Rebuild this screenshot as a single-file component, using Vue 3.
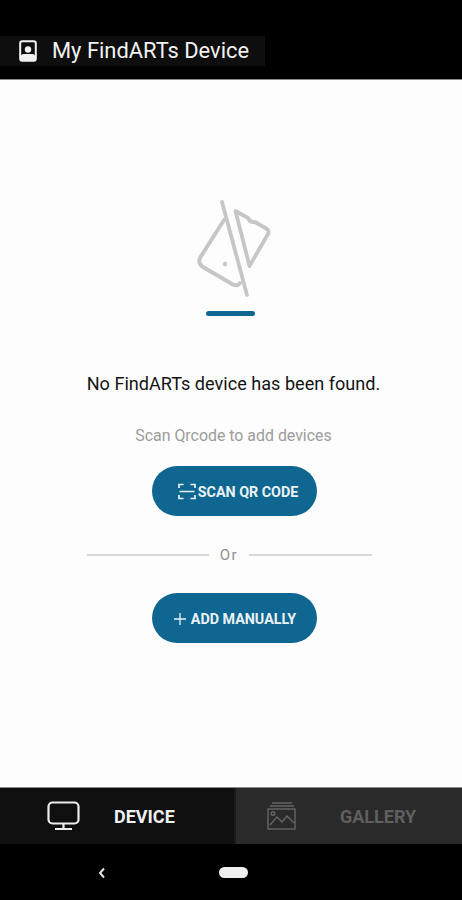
<template>
  <div class="screen">
    <header class="top">
      <div class="title-chip">
        <svg class="title-icon" width="18" height="22" viewBox="0 0 18 22">
          <rect x="1.2" y="1.2" width="15.6" height="19.6" rx="2" fill="none" stroke="#f2f2f2" stroke-width="2" />
          <circle cx="9" cy="9.5" r="3.2" fill="#f2f2f2" />
          <path d="M2 21v-5q0-2 3-2h8q3 0 3 2v5z" fill="#f2f2f2" />
        </svg>
        <span>My FindARTs Device</span>
      </div>
    </header>

    <main class="content">
      <svg class="empty-icon" width="90" height="110" viewBox="190 195 90 110">
        <g fill="none" stroke="#c6c6c6" stroke-width="3.8" stroke-linejoin="round" stroke-linecap="round">
          <path d="M221 202L246 295" />
          <path d="M223 220L199.500 257Q196 263 202 267L231 284Q236 287 239 283" />
          <path d="M234.500 211L247 218Q249 223 254 222L266 229Q268.500 231 267 234L248.500 266Z" />
        </g>
        <circle cx="224" cy="264" r="2.200" fill="#c6c6c6" />
      </svg>
      <div class="accent"></div>

      <p class="headline">No FindARTs device has been found.</p>
      <p class="hint">Scan Qrcode to add devices</p>

      <button class="action scan">
        <svg width="18" height="17" viewBox="0 0 18 17">
          <path d="M1 5V1.500H5.500M12.500 1.500H17V5M1 12V15.500H5.500M12.500 15.500H17V12M1.500 8.500H16.500" fill="none" stroke="#e8f1f5" stroke-width="1.700" />
        </svg>
        <span>SCAN QR CODE</span>
      </button>

      <div class="divider">
        <i></i>
        <span>Or</span>
        <i></i>
      </div>

      <button class="action add">
        <svg width="12" height="12" viewBox="0 0 12 12">
          <path d="M6 0V12M0 6H12" stroke="#e8f1f5" stroke-width="1.300" />
        </svg>
        <span>ADD MANUALLY</span>
      </button>
    </main>

    <nav class="tabs">
      <div v-for="tab in tabs" :key="tab.name" class="tab" :class="{ active: tab.active }">
        <svg v-if="tab.name === 'DEVICE'" width="34" height="30" viewBox="0 0 34 30">
          <rect x="1.500" y="1.500" width="30" height="21" rx="4" fill="none" stroke="#ececec" stroke-width="2.200" />
          <path d="M16.500 23V28M8 28H25" fill="none" stroke="#ececec" stroke-width="2.200" />
        </svg>
        <svg v-else width="30" height="28" viewBox="0 0 30 28">
          <g fill="none" stroke="#666" stroke-width="1.400">
            <path d="M5 1H25M3 4H27" />
            <rect x="1" y="7" width="27" height="20" />
            <circle cx="6" cy="11.500" r="1.800" />
            <path d="M3 23L10 15L15 20L20 14L27 21" />
          </g>
        </svg>
        <span>{{ tab.name }}</span>
      </div>
    </nav>

    <footer class="system-nav">
      <svg class="back" width="8" height="12" viewBox="0 0 8 12">
        <path d="M6 1.500L2 6L6 10.500" fill="none" stroke="#e4e4e4" stroke-width="2" />
      </svg>
      <div class="home"></div>
    </footer>
  </div>
</template>

<script setup>
const tabs = [
  { name: 'DEVICE', active: true },
  { name: 'GALLERY', active: false },
];
</script>

<style>
html,
body {
  background: #000;
}
</style>

<style scoped>
.screen {
  width: 462px;
  height: 900px;
  display: flex;
  flex-direction: column;
  background: #000;
  font-family: Roboto, "Liberation Sans", sans-serif;
  overflow: hidden;
}

.top {
  height: 80px;
  flex: none;
  padding-top: 36px;
  box-sizing: border-box;
  background: #000;
  border-bottom: 1px solid #8a8a8a;
}

.title-chip {
  width: 265px;
  height: 30px;
  display: flex;
  align-items: center;
  background: #0e0e0e;
  color: #f2f2f2;
  font-size: 21.900px;
  line-height: 30px;
}

.title-icon {
  margin: 0 15px 0 19px;
}

.content {
  flex: 1;
  display: flex;
  flex-direction: column;
  align-items: center;
  padding-top: 115px;
  background: #fdfdfd;
}

.empty-icon {
  display: block;
  margin-left: 9px;
}

.accent {
  width: 49px;
  height: 5px;
  margin-top: 6px;
  margin-left: -1px;
  border-radius: 3px;
  background: #0f6690;
}

.headline {
  margin: 57px 0 0 5px;
  font-size: 18.100px;
  line-height: 22px;
  color: #141414;
}

.hint {
  margin: 31px 0 0 5px;
  font-size: 15.900px;
  line-height: 20px;
  color: #9c9c9c;
}

.action {
  width: 165px;
  height: 50px;
  flex: none;
  display: flex;
  align-items: center;
  justify-content: center;
  border: 0;
  padding: 1px 0 0;
  border-radius: 25px;
  background: #0f6690;
  color: #eaf2f6;
  font-family: inherit;
  font-size: 14.300px;
  font-weight: 700;
  margin-left: 6px;
}

.scan {
  margin-top: 20px;
  gap: 2px;
  padding-left: 8px;
}

.add {
  gap: 5px;
  padding-left: 2px;
}

.divider {
  width: 285px;
  height: 20px;
  margin: 29px 0 28px -4px;
  display: flex;
  align-items: center;
  gap: 11px;
  color: #8f8f8f;
  font-size: 15px;
  letter-spacing: 1.500px;
}

.divider i {
  flex: 1;
  height: 2px;
  background: #d8d8d8;
}

.tabs {
  height: 56px;
  flex: none;
  display: flex;
  border-top: 1px solid #8a8a8a;
}

.tab {
  width: 228px;
  box-sizing: border-box;
  display: flex;
  align-items: center;
  background: #2a2a2a;
  border-left: 2px solid #1a1a1a;
  color: #5f5f5f;
  font-size: 18px;
  font-weight: 700;
  gap: 43px;
  padding-left: 31px;
}

.tab.active {
  width: 234px;
  background: #0f0f0f;
  border-left: 0;
  color: #f0f0f0;
  padding-left: 47px;
  gap: 33px;
}

.system-nav {
  height: 56px;
  flex: none;
  position: relative;
  display: flex;
  align-items: center;
  justify-content: center;
  background: #000;
}

.back {
  position: absolute;
  left: 98px;
  top: 23px;
}

.home {
  width: 29px;
  height: 11px;
  margin-left: 4px;
  border-radius: 6px;
  background: #f0f0f0;
}
</style>
